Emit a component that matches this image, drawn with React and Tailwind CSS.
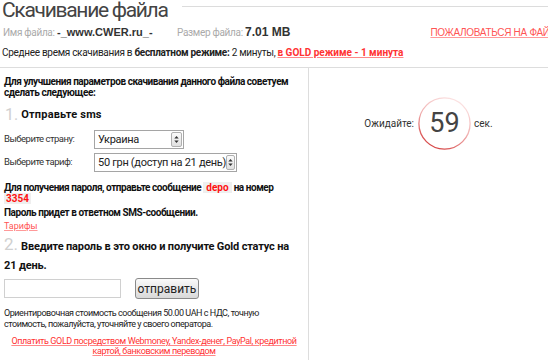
import React from "react";

const BODY = "Roboto, 'Liberation Sans', Arial, sans-serif";
const LIB = "'Liberation Sans', Arial, sans-serif";

function SelectBox({ value, width }) {
  return (
    <div className={`flex items-center h-[19px] border border-[#a5a5a5] bg-white ${width}`}>
      <span className="flex-1 pl-[3px] text-[11px] tracking-[-0.3px] text-[#222] leading-none whitespace-nowrap">{value}</span>
      <span className="flex items-center justify-center w-[11px] h-[15px] mr-[1px] border border-[#b0b0b0] bg-gradient-to-b from-[#fbfbfb] to-[#e0e0e0] rounded-[2px]">
        <svg width="5" height="9" viewBox="0 0 5 9">
          <path d="M2.5 1 L4.7 3.6 L0.3 3.6 Z" fill="#333" />
          <path d="M2.5 8 L4.7 5.4 L0.3 5.4 Z" fill="#333" />
        </svg>
      </span>
    </div>
  );
}

export default function App() {
  return (
    <div className="w-[548px] h-[360px] overflow-hidden bg-white text-[#222] flex flex-col" style={{ fontFamily: BODY }}>
      <div className="flex items-center h-[22px] -mt-[1px]">
        <div className="pl-[2px] text-[21px] tracking-[-1.3px] leading-none text-[#444] whitespace-nowrap">Скачивание файла</div>
        <div className="flex-1 h-px bg-[#dcdcdc] ml-[14px] -mt-[7px]"></div>
      </div>
      <div className="flex items-center h-[20px] mt-[1px] whitespace-nowrap">
        <span className="w-[57px] pl-[3px] text-[10px] tracking-[-0.3px] text-[#aaa]">Имя файла:</span>
        <span className="w-[120px] font-bold text-[11px] text-[#333]" style={{ fontFamily: LIB }}>-_www.CWER.ru_-</span>
        <span className="w-[68px] text-[10px] tracking-[-0.3px] text-[#aaa]">Размер файла:</span>
        <span className="font-bold text-[12px] text-[#333]" style={{ fontFamily: LIB }}>7.01 MB</span>
        <span className="ml-auto -mr-[8px] text-[10px] tracking-[-0.3px] text-[#f55] underline decoration-[#f99]" style={{ fontFamily: LIB }}>ПОЖАЛОВАТЬСЯ НА ФАЙЛ</span>
      </div>
      <div className="flex items-center h-[20px] pl-[2px] text-[10px] whitespace-nowrap text-[#222]">
        <span className="tracking-[-0.3px]">Среднее время скачивания в <b>бесплатном режиме:</b> 2 минуты,&nbsp;</span>
        <b className="text-[#f33] underline decoration-[#f88]">в GOLD режиме - 1 минута</b>
      </div>
      <div className="flex flex-1 mt-[5px] border-t border-[#ddd]">
        <div className="w-[309px] shrink-0 border-r border-[#ddd] flex flex-col pl-[4px] pr-[6px] pt-[8px]">
          <div className="text-[10px] font-bold tracking-[-0.45px] leading-[11px] text-[#111]">Для улучшения параметров скачивания данного файла советуем сделать следующее:</div>
          <div className="flex items-center mt-[7px] h-[20px]">
            <span className="text-[16px] text-[#d0d0d0] leading-none ml-[1px]">1.</span>
            <span className="ml-[3px] text-[11px] font-bold tracking-[0.2px] text-[#111]">Отправьте sms</span>
          </div>
          <div className="flex items-center mt-[5px] h-[19px]">
            <span className="w-[90px] text-[9.5px] tracking-[-0.5px] text-[#333]">Выберите страну:</span>
            <SelectBox value="Украина" width="w-[90px]" />
          </div>
          <div className="flex items-center mt-[4px] h-[19px]">
            <span className="w-[90px] text-[9.5px] tracking-[-0.5px] text-[#333]">Выберите тариф:</span>
            <SelectBox value="50 грн (доступ на 21 день)" width="w-[143px]" />
          </div>
          <div className="mt-[10px] text-[10px] font-bold tracking-[-0.45px] leading-[11px] text-[#111]">
            Для получения пароля, отправьте сообщение <span className="text-[#f11] bg-[#efefef] px-[3px] tracking-[0px]">depo</span> на номер <span className="text-[#f11] bg-[#efefef] px-[2px] tracking-[0px]">3354</span>
          </div>
          <div className="mt-[3px] text-[10px] font-bold tracking-[-0.45px] leading-[11px] text-[#111]">Пароль придет в ответном SMS-сообщении.</div>
          <div className="mt-[3px] text-[9px] text-[#f55] underline decoration-[#f99] leading-[11px]">Тарифы</div>
          <div className="mt-[5px] leading-[19px] text-[11px] font-bold tracking-[-0.15px] text-[#111]">
            <span className="inline-block text-[17px] leading-[14px] font-normal text-[#d0d0d0] mr-[3px] tracking-[0px]">2.</span>Введите пароль в это окно и получите Gold статус на 21 день.
          </div>
          <div className="flex items-center mt-[3px] h-[21px]">
            <div className="w-[117px] h-[19px] border border-[#d0d0d0] bg-white"></div>
            <div className="ml-[14px] w-[64px] h-[21px] border border-[#8a8a8a] rounded-[3px] bg-gradient-to-b from-[#fafafa] to-[#d9d9d9] flex items-center justify-center text-[12px] text-[#222]">отправить</div>
          </div>
          <div className="mt-[9px] w-[275px] text-[9px] tracking-[-0.45px] leading-[11px] text-[#222]">Ориентировочная стоимость сообщения 50.00 UAH с НДС, точную стоимость, пожалуйста, уточняйте у своего оператора.</div>
          <div className="mt-[6px] -ml-[4px] -mr-[6px] text-center text-[9px] tracking-[-0.38px] leading-[10px] text-[#f33] underline decoration-[#f88]">Оплатить GOLD посредством Webmoney, Yandex-денег, PayPal, кредитной картой, банковским переводом</div>
        </div>
        <div className="flex-1 flex items-start justify-center pt-[29px]">
          <div className="flex items-center">
            <span className="text-[10px] text-[#333]">Ожидайте:</span>
            <div className="relative w-[53px] h-[53px] ml-[4px] mr-[3px] flex items-center justify-center">
              <svg className="absolute inset-0" width="53" height="53" viewBox="0 0 53 53">
                <defs>
                  <linearGradient id="ring" x1="0.75" y1="0" x2="0.25" y2="1">
                    <stop offset="0" stopColor="#fce6e6" />
                    <stop offset="0.5" stopColor="#f0b0b0" />
                    <stop offset="1" stopColor="#d43c3c" />
                  </linearGradient>
                </defs>
                <circle cx="26.5" cy="26.5" r="25.6" fill="white" stroke="url(#ring)" strokeWidth="1.3" />
              </svg>
              <span className="relative text-[27px] text-[#444] leading-none">59</span>
            </div>
            <span className="text-[10px] text-[#333]">сек.</span>
          </div>
        </div>
      </div>
    </div>
  );
}
